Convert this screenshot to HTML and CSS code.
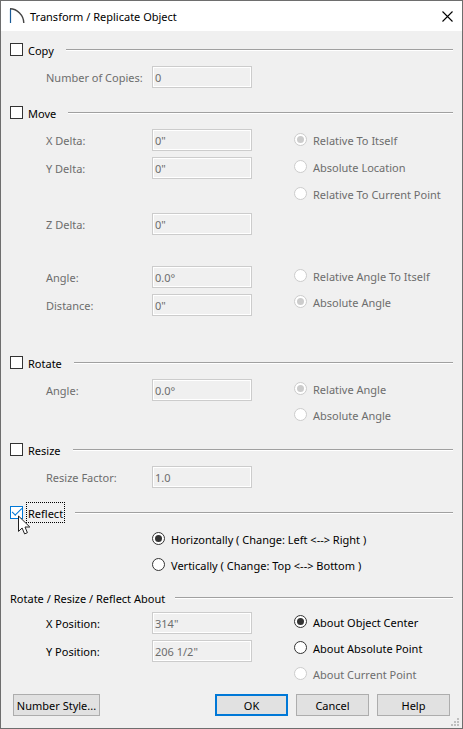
FILE: index.html
```html
<!DOCTYPE html>
<html lang="en">
<head>
    <meta charset="UTF-8">
    <meta name="viewport" content="width=device-width, initial-scale=1.0">
    <title>Transform / Replicate Object</title>
    <link rel="stylesheet" href="styles.css">
</head>
<body>

<form class="dialog">
    <header class="titlebar">
        <svg class="app-icon" width="16" height="16" viewBox="0 0 16 16" fill="none">
            <path d="M1.5 15V1" stroke="#1a5a96" stroke-width="1.2"/>
            <path d="M1 0.8C8 0.8 14.8 7 14.8 15" stroke="#444" stroke-width="1.4"/>
        </svg>
        <h1>Transform / Replicate Object</h1>
        <button type="button" class="close" aria-label="Close">
            <svg width="11" height="11" viewBox="0 0 11 11"><path d="M0.5 0.5L10.5 10.5M10.5 0.5L0.5 10.5" stroke="#000" stroke-width="1.1"/></svg>
        </button>
    </header>

    <main class="content">
        <section>
            <div class="section-head">
                <label class="option"><input type="checkbox"><span>Copy</span></label>
                <span class="rule"></span>
            </div>
            <div class="group">
                <div class="fields">
                    <div class="field disabled"><label for="copies">Number of Copies:</label><input type="text" id="copies" value="0" disabled></div>
                </div>
            </div>
        </section>

        <section>
            <div class="section-head">
                <label class="option"><input type="checkbox"><span>Move</span></label>
                <span class="rule"></span>
            </div>
            <div class="group">
                <div class="fields">
                    <div class="field disabled"><label for="x-delta">X Delta:</label><input type="text" id="x-delta" value='0"' disabled></div>
                    <div class="field disabled"><label for="y-delta">Y Delta:</label><input type="text" id="y-delta" value='0"' disabled></div>
                    <div class="field disabled spaced"><label for="z-delta">Z Delta:</label><input type="text" id="z-delta" value='0"' disabled></div>
                </div>
                <div class="radios loose">
                    <label class="option disabled"><input type="radio" name="move-from" checked disabled><span>Relative To Itself</span></label>
                    <label class="option disabled"><input type="radio" name="move-from" disabled><span>Absolute Location</span></label>
                    <label class="option disabled"><input type="radio" name="move-from" disabled><span>Relative To Current Point</span></label>
                </div>
            </div>
            <div class="group polar">
                <div class="fields">
                    <div class="field disabled"><label for="move-angle">Angle:</label><input type="text" id="move-angle" value="0.0°" disabled></div>
                    <div class="field disabled"><label for="distance">Distance:</label><input type="text" id="distance" value='0"' disabled></div>
                </div>
                <div class="radios">
                    <label class="option disabled"><input type="radio" name="move-angle-type" disabled><span>Relative Angle To Itself</span></label>
                    <label class="option disabled"><input type="radio" name="move-angle-type" checked disabled><span>Absolute Angle</span></label>
                </div>
            </div>
        </section>

        <section class="rotate">
            <div class="section-head">
                <label class="option"><input type="checkbox"><span>Rotate</span></label>
                <span class="rule"></span>
            </div>
            <div class="group">
                <div class="fields">
                    <div class="field disabled"><label for="rotate-angle">Angle:</label><input type="text" id="rotate-angle" value="0.0°" disabled></div>
                </div>
                <div class="radios">
                    <label class="option disabled"><input type="radio" name="rotate-type" checked disabled><span>Relative Angle</span></label>
                    <label class="option disabled"><input type="radio" name="rotate-type" disabled><span>Absolute Angle</span></label>
                </div>
            </div>
        </section>

        <section>
            <div class="section-head">
                <label class="option"><input type="checkbox"><span>Resize</span></label>
                <span class="rule"></span>
            </div>
            <div class="group">
                <div class="fields">
                    <div class="field disabled"><label for="factor">Resize Factor:</label><input type="text" id="factor" value="1.0" disabled></div>
                </div>
            </div>
        </section>

        <section>
            <div class="section-head">
                <label class="option focused"><input type="checkbox" checked><span>Reflect</span></label>
                <span class="rule"></span>
                <svg class="cursor" width="13" height="20" viewBox="0 0 13 20">
                    <path d="M0.5 1V16.4L4.1 13L6.6 18.9L9.4 17.7L7 12H11.8Z" fill="#fff" stroke="#222" stroke-width="1"/>
                </svg>
            </div>
            <div class="group reflect">
                <div class="radios">
                    <label class="option"><input type="radio" name="reflect" checked><span>Horizontally ( Change: Left &lt;--&gt; Right )</span></label>
                    <label class="option"><input type="radio" name="reflect"><span>Vertically ( Change: Top &lt;--&gt; Bottom )</span></label>
                </div>
            </div>
        </section>

        <section class="about">
            <div class="section-head">
                <h2>Rotate / Resize / Reflect About</h2>
                <span class="rule"></span>
            </div>
            <div class="group">
                <div class="fields">
                    <div class="field"><label for="x-pos">X Position:</label><input type="text" id="x-pos" value='314"' disabled></div>
                    <div class="field"><label for="y-pos">Y Position:</label><input type="text" id="y-pos" value='206 1/2"' disabled></div>
                </div>
                <div class="radios">
                    <label class="option"><input type="radio" name="about" checked><span>About Object Center</span></label>
                    <label class="option"><input type="radio" name="about"><span>About Absolute Point</span></label>
                    <label class="option disabled"><input type="radio" name="about" disabled><span>About Current Point</span></label>
                </div>
            </div>
        </section>

        <footer class="actions">
            <button type="button" class="number-style">Number Style...</button>
            <button type="submit" class="default">OK</button>
            <button type="button">Cancel</button>
            <button type="button">Help</button>
        </footer>
    </main>

    <svg class="grip" width="8" height="8" viewBox="0 0 8 8" fill="#bfbfbf">
        <path d="M6 0h2v2H6zM3 3h2v2H3zM6 3h2v2H6zM0 6h2v2H0zM3 6h2v2H3zM6 6h2v2H6z"/>
    </svg>
</form>

</body>
</html>
```
FILE: styles.css
```css
* {
    box-sizing: border-box;
}
body {
    margin: 0;
    font-family: "Noto Sans", sans-serif;
    font-size: 11px;
    line-height: 15px;
    color: #000;
}
.dialog {
    position: relative;
    min-height: 100vh;
    border: 1px solid #6e6e6e;
    background: #f0f0f0;
}
.titlebar {
    display: flex;
    align-items: center;
    height: 30px;
    padding: 0 9px 0 8px;
    background: #fff;
}
h1, h2 {
    margin: 0;
    font-size: 11px;
    font-weight: normal;
}
h1 {
    flex: 1;
    margin-left: 5px;
}
.close {
    display: flex;
    padding: 0;
    border: none;
    background: none;
}
.content {
    padding: 9px 9px 12px;
}
section + section {
    margin-top: 15px;
}
section.rotate {
    margin-top: 37px;
    padding-bottom: 1px;
}
section.about {
    margin-top: 14px;
}
.section-head {
    position: relative;
    display: flex;
    align-items: center;
    height: 19px;
    gap: 12px;
}
.about .section-head {
    gap: 10px;
}
.rule {
    flex: 1;
    align-self: flex-start;
    margin-top: 9px;
    height: 2px;
    border-top: 1px solid #a0a0a0;
    background: #fff;
}
.option {
    display: flex;
    align-items: center;
    height: 19px;
    gap: 5px;
}
.option span,
.about h2 {
    padding-top: 2px;
    white-space: nowrap;
}
.disabled {
    color: #6d6d6d;
}
.focused span {
    outline: 1px dotted #000;
    outline-offset: 1px;
}
.group {
    display: flex;
    gap: 42px;
    margin-top: 7px;
    padding-left: 36px;
}
.group.polar {
    margin-top: 31px;
}
.group.reflect {
    padding-left: 142px;
}
.about .group {
    margin-top: 5px;
}
.fields {
    display: flex;
    flex-direction: column;
    gap: 6px;
}
.field {
    display: flex;
    align-items: center;
}
.field label {
    width: 106px;
}
.field.spaced {
    margin-top: 28px;
}
.radios {
    display: flex;
    flex-direction: column;
    gap: 7px;
}
.radios .option {
    gap: 6px;
}
.radios.loose {
    gap: 8px;
    padding-top: 1px;
}
input {
    margin: 0;
    font: inherit;
}
input[type="text"] {
    width: 100px;
    height: 22px;
    padding: 0 2px;
    border: 1px solid #ccc;
    box-shadow: inset 0 0 0 1px #fff;
    background: #f0f0f0;
    color: #6d6d6d;
}
input[type="checkbox"],
input[type="radio"] {
    appearance: none;
    display: flex;
    flex: none;
    align-items: center;
    justify-content: center;
    width: 13px;
    height: 13px;
    border: 1px solid #333;
    background: #fff;
}
input[type="radio"] {
    border-radius: 50%;
}
input[type="radio"]:disabled {
    border-color: #ccc;
}
input[type="radio"]:checked::before {
    content: "";
    width: 7px;
    height: 7px;
    border-radius: 50%;
    background: #333;
}
input[type="radio"]:disabled:checked::before {
    background: #ccc;
}
input[type="checkbox"]:checked {
    border-color: #0078d7;
}
input[type="checkbox"]:checked::before {
    content: "";
    width: 9px;
    height: 4px;
    margin-bottom: 4px;
    border: solid #0078d7;
    border-width: 0 0 1px 1px;
    transform: rotate(-45deg);
}
.cursor {
    position: absolute;
    left: 8px;
    top: 12px;
}
.actions {
    display: flex;
    gap: 8px;
    margin-top: 11px;
    padding: 0 3px;
}
.actions button {
    width: 73px;
    height: 22px;
    padding: 0;
    border: 1px solid #adadad;
    background: #e1e1e1;
    font: inherit;
    color: #000;
    white-space: nowrap;
}
.actions .number-style {
    width: 87px;
    margin-right: auto;
}
.actions .default {
    border: 2px solid #0078d7;
}
.grip {
    position: absolute;
    right: 3px;
    bottom: 2px;
}
```
